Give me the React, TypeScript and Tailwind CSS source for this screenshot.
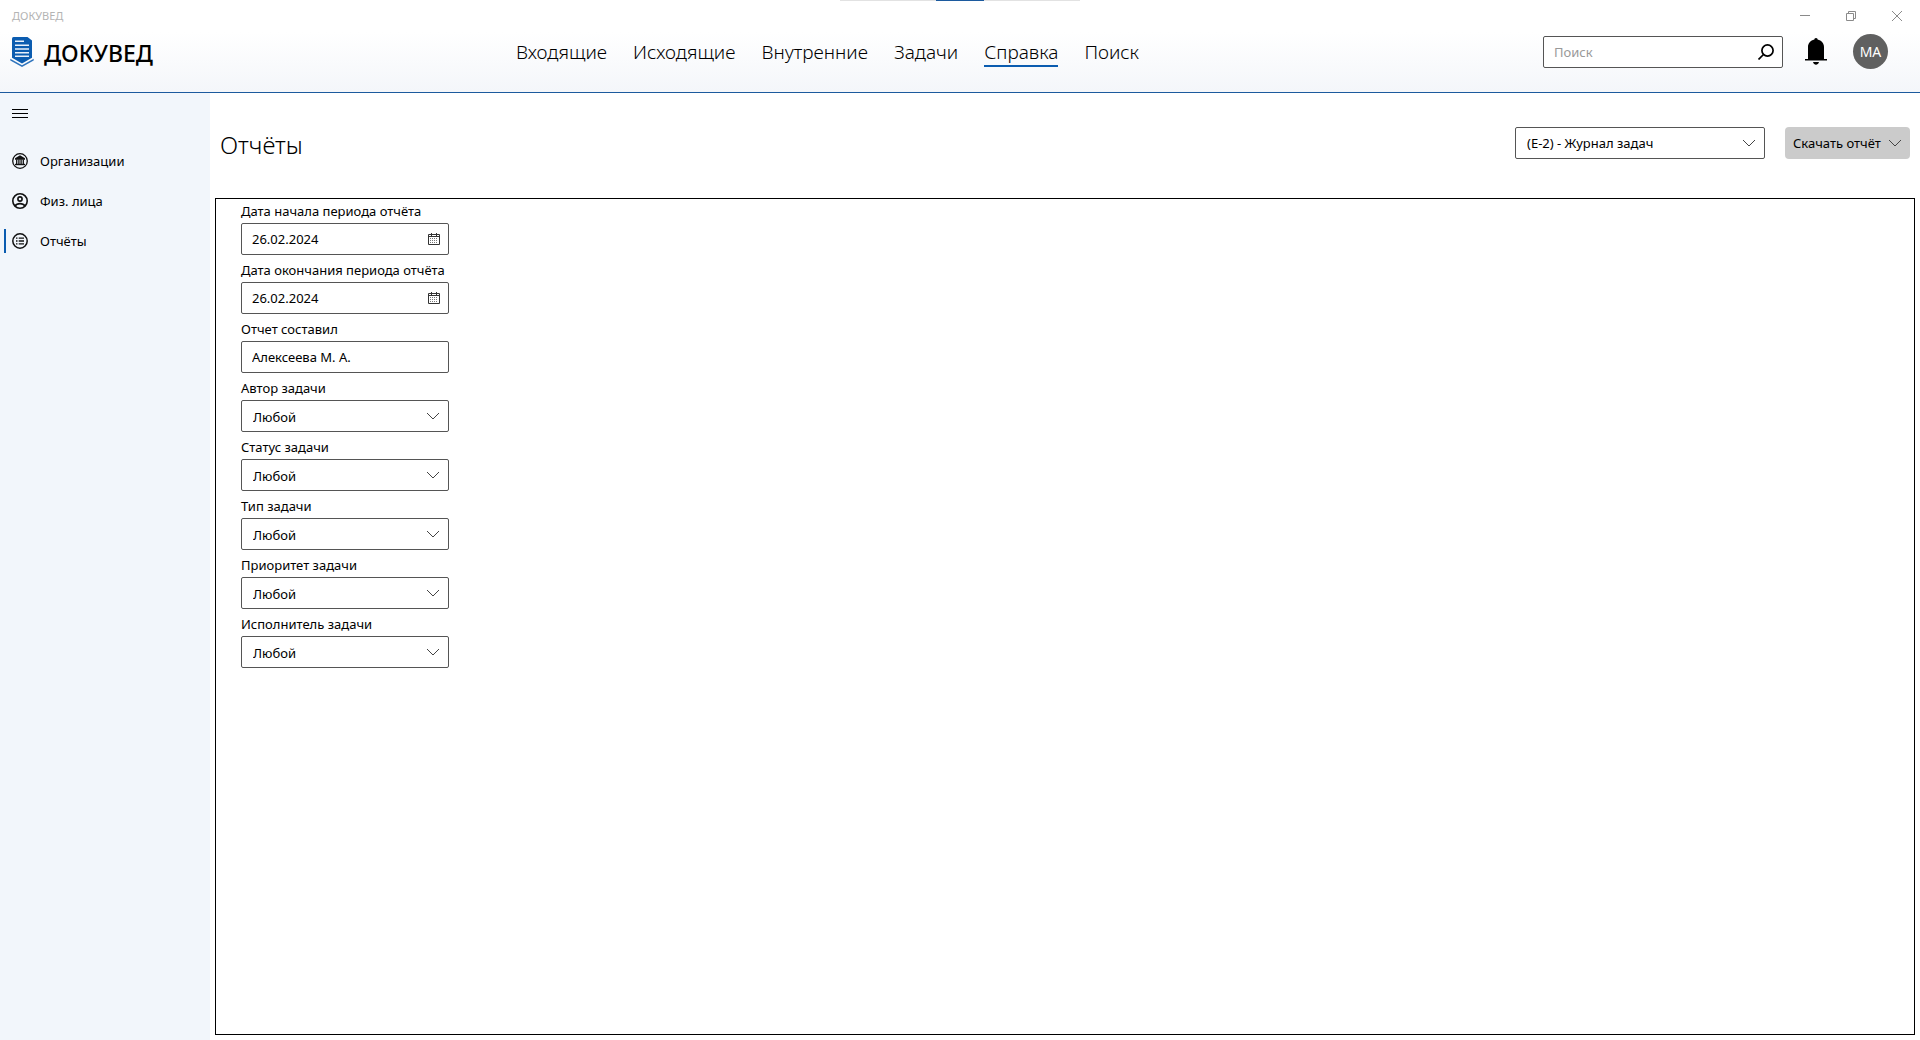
import React from "react";

const nav = ["Входящие", "Исходящие", "Внутренние", "Задачи", "Справка", "Поиск"];

function Chevron({ className }: { className: string }) {
  return (
    <svg className={className} width="14" height="14" viewBox="0 0 14 14" fill="none" stroke="#444" strokeWidth="1">
      <path d="M1 4l6 6 6-6" />
    </svg>
  );
}

function Logo() {
  return (
    <svg width="24" height="32" viewBox="0 0 24 32" fill="none">
      <path d="M3.500 1h14L22 4.500v17.200L12 27.500 2 21.700V2.500A1.500 1.500 0 0 1 3.500 1z" fill="#0b5cb0" />
      <path d="M5 5.300h9M5 9.200h14M5 13h14M5 16.700h14M5 20.300h14" stroke="#e8f0fa" strokeWidth="1.500" />
      <path d="M.3 22.800v1.600L12 31l11.700-6.600v-1.600L12 29.300z" fill="#2f74bd" />
    </svg>
  );
}

function BankIcon() {
  return (
    <svg width="16" height="16" viewBox="0 0 16 16" fill="none" stroke="#111">
      <circle cx="8" cy="8" r="7.3" strokeWidth="1.3" />
      <path d="M8 2.300l5 3V6.800H3V5.300z" fill="#111" stroke="none" />
      <path d="M4.700 6.500v4.500M6.900 6.500v4.500M9.100 6.500v4.500M11.300 6.500v4.500" strokeWidth="1.300" />
      <path d="M3 11.500h10" strokeWidth="1.400" />
    </svg>
  );
}

function PersonIcon() {
  return (
    <svg width="16" height="16" viewBox="0 0 16 16" fill="none" stroke="#111" strokeWidth="1.600">
      <circle cx="8" cy="8" r="7.200" />
      <circle cx="8" cy="6" r="2.100" />
      <path d="M3 13c1.200-1.800 3-2.400 5-2.400s3.800.6 5 2.400" />
    </svg>
  );
}

function ListIcon() {
  return (
    <svg width="16" height="16" viewBox="0 0 16 16" fill="none" stroke="#111" strokeWidth="1.500">
      <circle cx="8" cy="8" r="7.200" />
      <path d="M4 5.200h1.500M4 8h1.500M4 10.800h1.500M6.700 5.200H12M6.700 8H12M6.700 10.800H12" strokeWidth="1.300" />
    </svg>
  );
}

function CalendarIcon() {
  return (
    <svg width="12" height="12" viewBox="0 0 12 12" fill="none" stroke="#333">
      <path d="M.5 1.500h11v10H.5zM.5 3.500h11M3.500 0v3M8.500 0v3" />
      <path d="M2 5.500h8M2 7.500h8M2 9.500h8" stroke="#777" strokeDasharray="1 1" />
    </svg>
  );
}

const side = [
  { text: "Организации", icon: <BankIcon />, active: false },
  { text: "Физ. лица", icon: <PersonIcon />, active: false },
  { text: "Отчёты", icon: <ListIcon />, active: true },
];

const fields = [
  { id: "start", label: "Дата начала периода отчёта", kind: "date", value: "26.02.2024" },
  { id: "end", label: "Дата окончания периода отчёта", kind: "date", value: "26.02.2024" },
  { id: "compiler", label: "Отчет составил", kind: "text", value: "Алексеева М. А." },
  { id: "author", label: "Автор задачи", kind: "select", value: "Любой" },
  { id: "status", label: "Статус задачи", kind: "select", value: "Любой" },
  { id: "type", label: "Тип задачи", kind: "select", value: "Любой" },
  { id: "priority", label: "Приоритет задачи", kind: "select", value: "Любой" },
  { id: "assignee", label: "Исполнитель задачи", kind: "select", value: "Любой" },
];

export default function App() {
  return (
    <div className="flex min-h-screen flex-col bg-white font-['Noto_Sans',sans-serif] text-[13px] leading-5 text-black">
      <header className="relative border-b border-[#1c5a9e] bg-linear-to-b from-white from-35% to-[#f4f6fa]">
        <div className="absolute inset-x-0 top-0 mx-auto flex h-px w-60 bg-[#e2e2e2]">
          <div className="ml-24 w-12 bg-[#1c5a9e]" />
        </div>
        <div className="flex h-8 items-center justify-between pl-3 text-[#b4b4b4]">
          <span className="text-[11px]">ДОКУВЕД</span>
          <div className="flex text-[#8a8a8a]">
            <button aria-label="Свернуть" className="flex h-8 w-[46px] items-center justify-center">
              <svg width="10" height="10" viewBox="0 0 10 10" stroke="currentColor"><path d="M0 4.500h10" /></svg>
            </button>
            <button aria-label="Восстановить" className="flex h-8 w-[46px] items-center justify-center">
              <svg width="10" height="10" viewBox="0 0 10 10" fill="none" stroke="currentColor"><path d="M.5 2.500h7v7h-7zM2.500 2.500v-2h7v7h-2" /></svg>
            </button>
            <button aria-label="Закрыть" className="flex h-8 w-[46px] items-center justify-center">
              <svg width="10" height="10" viewBox="0 0 10 10" stroke="currentColor"><path d="M0 0l10 10M10 0L0 10" /></svg>
            </button>
          </div>
        </div>
        <div className="flex h-[60px] items-start pr-8 pl-[10px]">
          <div className="flex w-[506px] items-start gap-[10px] pt-1">
            <Logo />
            <span className="pt-px text-[23px] leading-8 font-medium">ДОКУВЕД</span>
          </div>
          <nav className="flex flex-1 gap-[26px] pt-[7px] text-[19px] leading-[26px] font-light">
            {nav.map((n) => (
              <a key={n} href="#" className={n === "Справка" ? "border-b-2 border-[#0b5cb0]" : ""}>
                {n}
              </a>
            ))}
          </nav>
          <div className="mt-1 flex h-8 w-60 items-center rounded-xs border border-[#555] bg-white pr-2 pl-[10px]">
            <input aria-label="Поиск" placeholder="Поиск" className="min-w-0 flex-1 outline-none placeholder:text-[#999]" />
            <button aria-label="Найти">
              <svg width="16" height="16" viewBox="0 0 16 16" fill="none" stroke="#000" strokeWidth="1.700"><circle cx="9.500" cy="6.500" r="5.600" /><path d="M5.500 10.500L.5 15.500" /></svg>
            </button>
          </div>
          <button aria-label="Уведомления" className="mt-[6px] ml-[22px]">
            <svg width="22" height="27" viewBox="0 0 22 27"><path d="M11 0c1.200 0 1.600 1 1.600 1.600C16.500 2.400 19 5.500 19 9v12h3v1.500H0V21h3V9c0-3.500 2.500-6.600 6.400-7.400C9.400 1 9.800 0 11 0zM8 24h6c-.5 1.800-1.700 2.700-3 2.700S8.500 25.800 8 24z" /></svg>
          </button>
          <button className="mt-[2px] ml-[26px] size-[35px] rounded-full bg-[#606060] text-sm text-white">МА</button>
        </div>
      </header>
      <div className="flex flex-1">
        <aside className="w-[210px] bg-[#f2f6fb]">
          <button aria-label="Меню" className="flex h-10 items-center pl-3">
            <svg width="16" height="9" viewBox="0 0 16 9" stroke="#000"><path d="M0 .5h16M0 4.500h16M0 8.500h16" /></svg>
          </button>
          <ul className="pt-2">
            {side.map((s) => (
              <li key={s.text}>
                <a href="#" className="flex h-10 items-center pl-1">
                  <span className={s.active ? "h-6 w-[2px] bg-[#0b5cb0]" : "h-6 w-[2px]"} />
                  <span className="ml-[6px]">{s.icon}</span>
                  <span className="ml-3">{s.text}</span>
                </a>
              </li>
            ))}
          </ul>
        </aside>
        <main className="flex flex-1 flex-col px-[5px] pb-[5px]">
          <div className="flex h-[105px] items-start px-[5px] pt-[34px]">
            <h1 className="flex-1 pt-[2px] text-2xl leading-8 font-light">Отчёты</h1>
            <div className="relative mr-5">
              <select aria-label="Отчёт" className="h-8 w-[250px] appearance-none rounded-xs border border-[#555] bg-white pr-8 pl-[11px]">
                <option>(Е-2) - Журнал задач</option>
              </select>
              <Chevron className="pointer-events-none absolute top-[9px] right-[9px]" />
            </div>
            <button className="flex h-8 w-[125px] items-center justify-between rounded-sm bg-[#cbcbcb] px-2">
              Скачать отчёт
              <Chevron className="" />
            </button>
          </div>
          <form className="flex-1 border border-black pl-[25px]">
            {fields.map((f) => (
              <div key={f.id} className="mb-[3px] w-[208px]">
                <label htmlFor={f.id} className="block h-6 pt-px leading-[22px] whitespace-nowrap">{f.label}</label>
                <div className="relative h-8">
                  {f.kind === "select" ? (
                    <select id={f.id} className="h-8 w-full appearance-none rounded-xs border border-[#555] bg-white pt-px pl-[11px]">
                      <option>{f.value}</option>
                    </select>
                  ) : (
                    <input id={f.id} defaultValue={f.value} className="h-8 w-full rounded-xs border border-[#555] pl-[10px]" />
                  )}
                  {f.kind === "select" && <Chevron className="pointer-events-none absolute top-[9px] right-[9px]" />}
                  {f.kind === "date" && (
                    <button type="button" aria-label="Открыть календарь" className="absolute top-[10px] right-[9px]">
                      <CalendarIcon />
                    </button>
                  )}
                </div>
              </div>
            ))}
          </form>
        </main>
      </div>
    </div>
  );
}
